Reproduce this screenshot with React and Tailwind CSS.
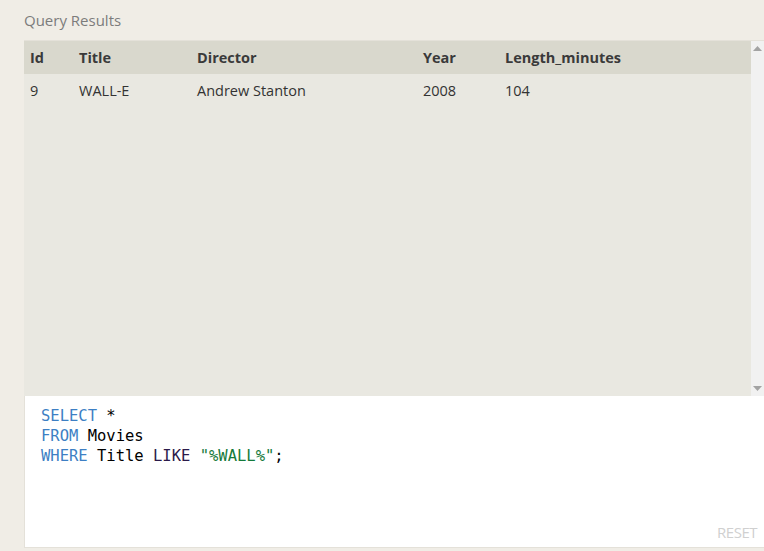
const columns = [
  { key: 'id', label: 'Id', width: 'w-[49px]' },
  { key: 'title', label: 'Title', width: 'w-[118px]' },
  { key: 'director', label: 'Director', width: 'w-[226px]' },
  { key: 'year', label: 'Year', width: 'w-[82px]' },
  { key: 'length', label: 'Length_minutes', width: '' },
];

const rows = [
  { id: 9, title: 'WALL-E', director: 'Andrew Stanton', year: 2008, length: 104 },
];

function ScrollArrow({ down }) {
  return (
    <svg width="9" height="5" viewBox="0 0 9 5" className={down ? 'rotate-180' : ''}>
      <path d="M0 5 L4.5 0 L9 5 Z" fill="#a3a3a3" />
    </svg>
  );
}

export default function App() {
  return (
    <div className="w-[764px] h-[551px] bg-[#f0ede6] font-['Open_Sans',sans-serif] text-[#333] overflow-hidden">
      {/* Title */}
      <div className="h-[40px] pl-[24px] pt-[9px] text-[15px] leading-[22px] text-[#7c7c7c]">
        Query Results
      </div>

      {/* Results table */}
      <div className="ml-[24px] h-[356px] flex bg-[#e9e8e1] border-t border-[#e4e1d9]">
        <div className="flex-1">
          <table className="w-full border-collapse text-[14.5px]">
            <thead>
              <tr className="bg-[#d9d8cd] h-[33px]">
                {columns.map(col => (
                  <th key={col.key} className={`${col.width} text-left font-bold px-[6px] text-[#3a3a3a]`}>
                    {col.label}
                  </th>
                ))}
              </tr>
            </thead>
            <tbody>
              {rows.map(row => (
                <tr key={row.id} className="h-[33px]">
                  {columns.map(col => (
                    <td key={col.key} className="px-[6px] text-[#333]">
                      {row[col.key]}
                    </td>
                  ))}
                </tr>
              ))}
            </tbody>
          </table>
        </div>
        {/* Scrollbar */}
        <div className="w-[13px] bg-[#f1f1f1] flex flex-col justify-between items-center py-[5px]">
          <ScrollArrow />
          <ScrollArrow down />
        </div>
      </div>

      {/* SQL editor */}
      <div className="ml-[24px] h-[152px] bg-white border-l border-[#e4e1d9] border-b flex flex-col">
        <pre className="flex-1 pl-[16px] pt-[10px] font-['DejaVu_Sans_Mono',monospace] text-[15.5px] leading-[20px] text-black">
          <span className="text-[#3d7fc4]">SELECT</span> *{'\n'}
          <span className="text-[#3d7fc4]">FROM</span> Movies{'\n'}
          <span className="text-[#3d7fc4]">WHERE</span> Title <span className="text-[#2b1a4a]">LIKE</span>{' '}
          <span className="text-[#147a3a]">"%WALL%"</span>;
        </pre>
        <div className="flex justify-end pr-[7px] pb-[5px]">
          <span className="text-[15px] leading-[20px] text-[#d0d0d0] tracking-[-0.5px]">RESET</span>
        </div>
      </div>
    </div>
  );
}
